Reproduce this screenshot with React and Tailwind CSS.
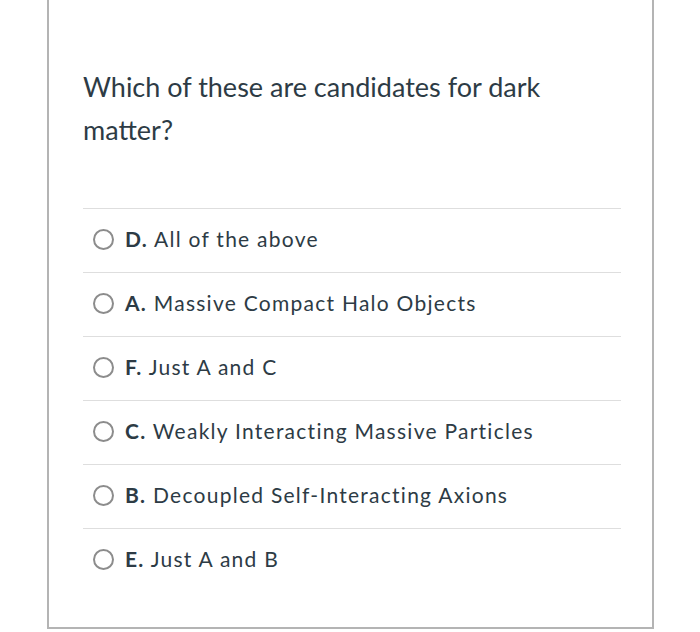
import React from 'react';

const OPTIONS = [
  { key: 'D', text: 'All of the above' },
  { key: 'A', text: 'Massive Compact Halo Objects' },
  { key: 'F', text: 'Just A and C' },
  { key: 'C', text: 'Weakly Interacting Massive Particles' },
  { key: 'B', text: 'Decoupled Self-Interacting Axions' },
  { key: 'E', text: 'Just A and B' },
];

const App = () => {
  return (
    <div className="h-[632px] w-[700px] bg-white pl-[47px]" style={{ fontFamily: 'Lato, "Open Sans", sans-serif' }}>
      <div className="h-[629px] w-[607px] border-x-2 border-b-2 border-[#b4b4b4] pl-[34px] pr-[31px] pt-[65px] text-[#2d3b45]">
        <h2 className="text-[27px] font-normal leading-[43px]">
          Which of these are candidates for dark matter?
        </h2>
        <ul className="mt-[57px]">
          {OPTIONS.map((opt) => (
            <li key={opt.key} className="flex h-[64px] items-center border-t border-[#dedede] pb-[3px]">
              <span className="ml-[10px] mr-[11px] h-[21px] w-[21px] shrink-0 rounded-full border-2 border-[#8c8c8c]" />
              <span className="text-[21px] tracking-[0.06em]">
                <strong className="font-bold">{opt.key}.</strong> {opt.text}
              </span>
            </li>
          ))}
        </ul>
      </div>
    </div>
  );
};

export default App;
